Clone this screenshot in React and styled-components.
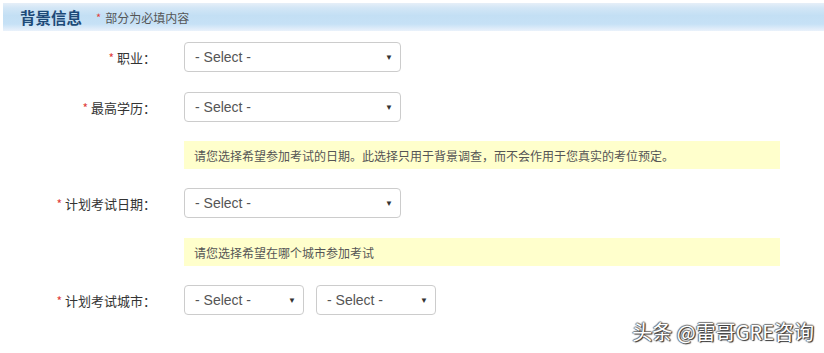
import React from "react";
import styled, { createGlobalStyle } from "styled-components";

const Global = createGlobalStyle`
  html, body { margin: 0; padding: 0; background: #fff; }
  body { font-family: "Liberation Sans", Arial, "Noto Sans CJK SC", sans-serif; color: #333; }
`;

const Page = styled.div`
  position: relative;
  width: 824px;
  height: 353px;
  overflow: hidden;
  background: #fff;
`;

const Header = styled.div`
  margin: 3px 0 0 3px;
  height: 28px;
  display: flex;
  align-items: center;
  padding-left: 17px;
  background: linear-gradient(to bottom, #e6eff8 0%, #d2e6f6 18%, #c3dff4 45%, #c6e1f6 75%, #dcebf9 90%, #eaf2fb 100%);
`;

const Title = styled.h2`
  margin: 0;
  font-size: 15.5px;
  font-weight: bold;
  color: #1d4a78;
  font-family: "Noto Sans CJK SC", sans-serif;
`;

const Req = styled.span`
  color: #e0403c;
  font-size: ${(p) => p.size || 12}px;
  margin-right: ${(p) => p.gap || 3}px;
`;

const Hint = styled.span`
  margin-left: 14px;
  font-size: 12px;
  color: #555;
  font-family: "Noto Sans CJK SC", sans-serif;
  display: flex;
  align-items: center;
`;

const Form = styled.div`
  display: flex;
  flex-direction: column;
  padding-top: 11px;
`;

const Row = styled.div`
  display: flex;
  align-items: center;
  height: 30px;
  margin-bottom: ${(p) => p.mb}px;
`;

const Label = styled.label`
  width: 156px;
  flex: none;
  text-align: right;
  padding-right: 28px;
  font-size: 13px;
  color: #333;
  font-family: "Noto Sans CJK SC", sans-serif;
  box-sizing: content-box;
`;

const Controls = styled.div`
  display: flex;
  gap: 12px;
`;

const SelectBox = styled.div`
  box-sizing: border-box;
  width: ${(p) => p.w}px;
  height: 30px;
  border: 1px solid #ccc;
  border-radius: 4px;
  background: #fff;
  display: flex;
  align-items: center;
  justify-content: space-between;
  padding: 0 7px 0 10px;
  font-size: 14px;
  color: #555;
  font-family: "Liberation Sans", Arial, sans-serif;
`;

const Arrow = styled.span`
  font-size: 8px;
  color: #333;
`;

const Note = styled.div`
  margin-left: 184px;
  width: 596px;
  box-sizing: border-box;
  height: 28px;
  background: #ffffcc;
  display: flex;
  align-items: center;
  padding-left: 10px;
  font-size: 12px;
  color: #555;
  font-family: "Noto Sans CJK SC", sans-serif;
  margin-bottom: ${(p) => p.mb}px;
`;

const Watermark = styled.div`
  position: absolute;
  right: 10px;
  bottom: 7px;
  font-size: 20px;
  color: #fff;
  font-family: "Noto Sans CJK SC", sans-serif;
  text-shadow: 1px 1px 1px #333, -1px 0 1px #666, 0 -1px 1px #777, 1px 0 1px #444;
`;

const Select = ({ w = 217 }) => (
  <SelectBox w={w}>
    <span>- Select -</span>
    <Arrow>▼</Arrow>
  </SelectBox>
);

export default function App() {
  return (
    <Page>
      <Global />
      <Header>
        <Title>背景信息</Title>
        <Hint>
          <Req size={11} gap={4}>*</Req>部分为必填内容
        </Hint>
      </Header>
      <Form>
        <Row mb={20}>
          <Label><Req>*</Req>职业：</Label>
          <Controls><Select /></Controls>
        </Row>
        <Row mb={19}>
          <Label><Req>*</Req>最高学历：</Label>
          <Controls><Select /></Controls>
        </Row>
        <Note mb={19}>请您选择希望参加考试的日期。此选择只用于背景调查，而不会作用于您真实的考位预定。</Note>
        <Row mb={20}>
          <Label><Req>*</Req>计划考试日期：</Label>
          <Controls><Select /></Controls>
        </Row>
        <Note mb={19}>请您选择希望在哪个城市参加考试</Note>
        <Row mb={0}>
          <Label><Req>*</Req>计划考试城市：</Label>
          <Controls>
            <Select w={120} />
            <Select w={120} />
          </Controls>
        </Row>
      </Form>
      <Watermark>头条 @雷哥GRE咨询</Watermark>
    </Page>
  );
}
